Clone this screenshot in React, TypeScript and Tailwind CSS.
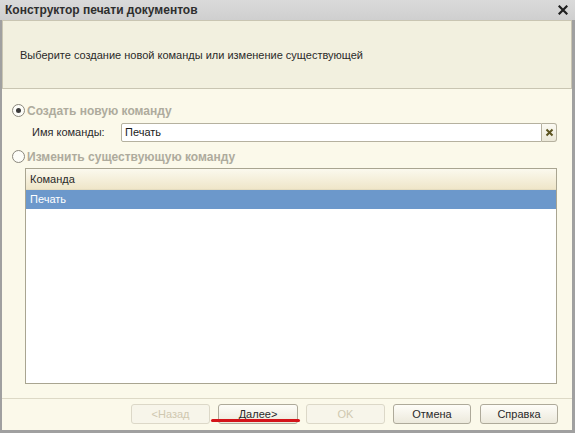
import React from "react";

const font = { fontFamily: '"Liberation Sans", Arial, sans-serif' };

function Radio({ checked }: { checked?: boolean }) {
  return (
    <div className="w-[13px] h-[13px] rounded-full border border-[#8a877c] bg-[#fdfdf8] flex items-center justify-center shrink-0">
      {checked && <div className="w-[5px] h-[5px] rounded-full bg-[#3a3a3a]" />}
    </div>
  );
}

function Btn({ label, disabled, w }: { label: string; disabled?: boolean; w: string }) {
  return (
    <div
      className={`${w} h-[20px] rounded-[3px] border flex items-center justify-center text-[11px] ${
        disabled
          ? "border-[#dcd8c8] bg-[#f7f5ea] text-[#cfc8b0]"
          : "border-[#aeaa9a] bg-gradient-to-b from-[#fefdf8] to-[#ece9dc] text-[#2a2a2a]"
      }`}
    >
      {label}
    </div>
  );
}

export default function App() {
  return (
    <div style={font} className="w-[575px] h-[433px] flex flex-col bg-[#a0a0a0] overflow-hidden">
      {/* title bar */}
      <div className="h-[20px] bg-gradient-to-b from-[#dadada] to-[#cfcfcf] flex items-center justify-between pl-[5px] pr-[7px] shrink-0">
        <span className="text-[12px] font-bold text-[#2e2e2e]">Конструктор печати документов</span>
        <svg width="10" height="10" viewBox="0 0 10 10">
          <path d="M1.5 1.5 L8.5 8.5 M8.5 1.5 L1.5 8.5" stroke="#1f1f1f" strokeWidth="2.2" strokeLinecap="square" />
        </svg>
      </div>
      <div className="flex-1 flex flex-col ml-[2px] mr-[3px] mb-[3px] bg-[#fbf9ea]">
        {/* header */}
        <div className="h-[69px] bg-[#f2f0df] border border-[#c9c5b2] flex items-center pl-[17px] pt-[2px] shrink-0">
          <span className="text-[11px] text-[#2a2a2a]">Выберите создание новой команды или изменение существующей</span>
        </div>
        {/* body */}
        <div className="flex-1 flex flex-col pl-[10px] pr-[15px]">
          <div className="flex items-center gap-[2px] mt-[15px] h-[13px]">
            <Radio checked />
            <span className="text-[12px] font-bold text-[#aeab9d]">Создать новую команду</span>
          </div>
          <div className="flex items-center mt-[6px] h-[19px]">
            <span className="text-[11px] text-[#2a2a2a] ml-[20px] w-[89px]">Имя команды:</span>
            <div className="flex-1 h-[19px] bg-white border border-[#b5b19f] rounded-l-[2px] flex items-center pl-[3px] text-[11px] text-[#1a1a1a]">
              Печать
            </div>
            <div className="w-[15px] h-[19px] border border-l-0 border-[#b5b19f] rounded-r-[3px] bg-gradient-to-b from-[#fbfaf2] to-[#ebe8d8] flex items-center justify-center">
              <svg width="9" height="9" viewBox="0 0 9 9">
                <path d="M1.5 1.5 L7.5 7.5 M7.5 1.5 L1.5 7.5" stroke="#5c5420" strokeWidth="2" />
              </svg>
            </div>
          </div>
          <div className="flex items-center gap-[2px] mt-[8px] h-[13px]">
            <Radio />
            <span className="text-[12px] font-bold text-[#aeab9d]">Изменить существующую команду</span>
          </div>
          <div className="ml-[13px] mt-[5px] h-[216px] border border-[#a9a591] bg-white flex flex-col">
            <div className="h-[21px] bg-gradient-to-b from-[#fbf9ee] to-[#efe6c9] border-b border-[#e4dcc0] flex items-center pl-[4px] text-[11px] text-[#2a2a2a] shrink-0">
              Команда
            </div>
            <div className="h-[19px] bg-[#6c98cb] flex items-center pl-[4px] text-[11px] text-white shrink-0">
              Печать
            </div>
          </div>
          <div className="mt-[14px] -ml-[10px] -mr-[15px] border-t border-[#ddd9c6]" />
          <div className="flex items-start mt-[5px]">
            <div className="ml-[119px]">
              <Btn label="<Назад" disabled w="w-[79px]" />
            </div>
            <div className="ml-[8px] relative">
              <Btn label="Далее>" w="w-[80px]" />
              <div className="absolute left-[-7px] top-[15px] w-[89px] h-[3px] rounded-full bg-[#d4141a]" />
            </div>
            <div className="ml-[8px]">
              <Btn label="OK" disabled w="w-[79px]" />
            </div>
            <div className="ml-[8px]">
              <Btn label="Отмена" w="w-[78px]" />
            </div>
            <div className="ml-[9px]">
              <Btn label="Справка" w="w-[78px]" />
            </div>
          </div>
        </div>
      </div>
    </div>
  );
}
